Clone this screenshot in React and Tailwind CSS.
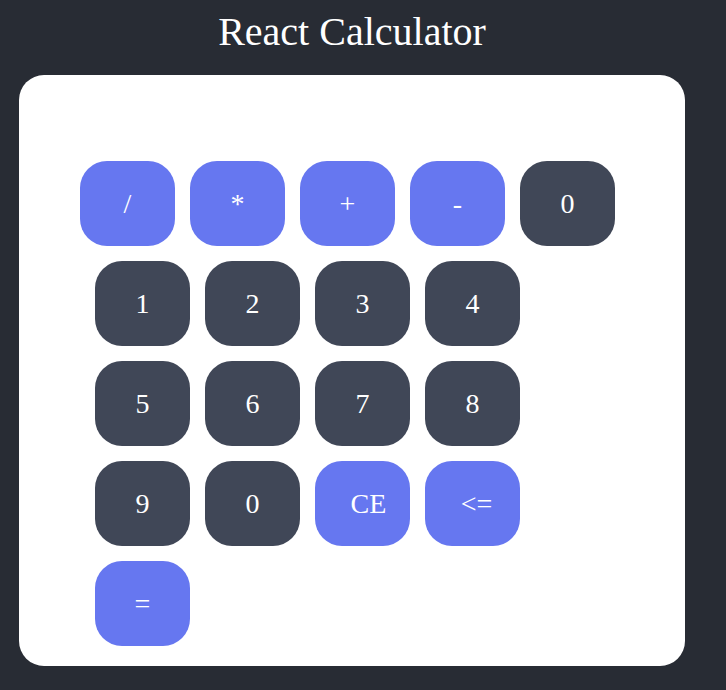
const ops = ['/', '*', '+', '-'];
const rows = [
  [
    { label: '1' },
    { label: '2' },
    { label: '3' },
    { label: '4' },
  ],
  [
    { label: '5' },
    { label: '6' },
    { label: '7' },
    { label: '8' },
  ],
  [
    { label: '9' },
    { label: '0' },
    { label: 'CE', op: true, extra: 'pl-[12px]' },
    { label: '<=', op: true, extra: 'pl-[8px]' },
  ],
  [{ label: '=', op: true }],
];

function Key({ label, op, extra = '' }) {
  return (
    <button
      className={`w-[95px] h-[85px] rounded-[27px] flex items-center justify-center text-[28px] leading-none text-white ${
        op ? 'bg-[#6677f0]' : 'bg-[#404757]'
      } ${extra}`}
    >
      {label}
    </button>
  );
}

export default function App() {
  return (
    <div
      className="min-h-screen bg-[#282c34]"
      style={{ fontFamily: '"Liberation Serif", "Times New Roman", serif' }}
    >
      <div className="w-[704px] flex flex-col items-center">
        <h1 className="text-white text-[40px] leading-none mt-[12px] mb-[23px]">React Calculator</h1>

        <div className="w-[666px] bg-white rounded-[25px] pt-[86px] pb-[20px] pl-[61px] flex flex-col gap-[15px]">
          <div className="flex gap-[15px]">
            {ops.map((o) => (
              <Key key={o} label={o} op />
            ))}
            <Key label="0" />
          </div>
          {rows.map((row, i) => (
            <div key={i} className="flex gap-[15px] ml-[15px]">
              {row.map((k) => (
                <Key key={k.label} {...k} />
              ))}
            </div>
          ))}
        </div>
      </div>
    </div>
  );
}
